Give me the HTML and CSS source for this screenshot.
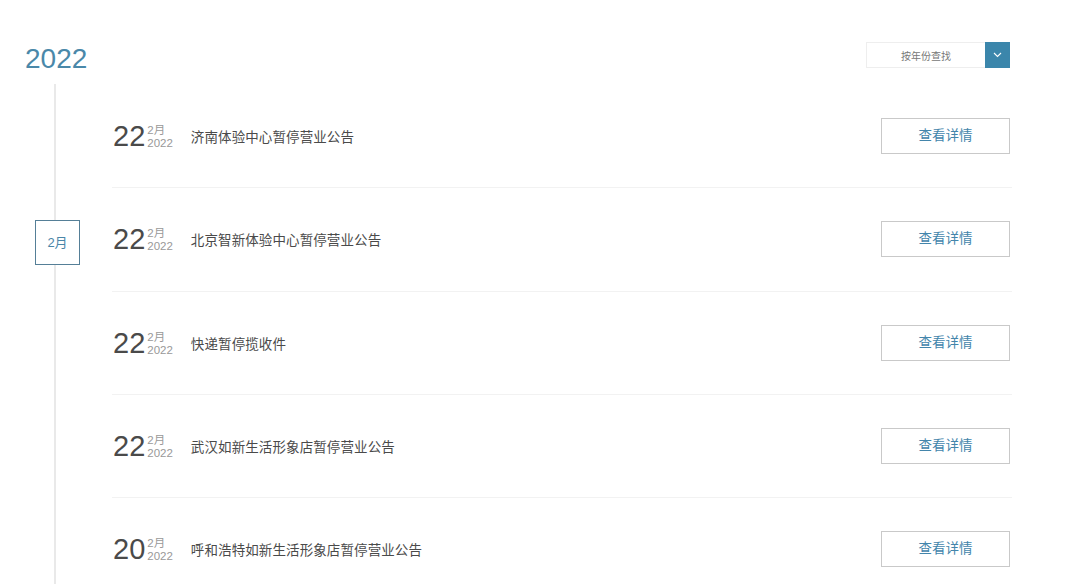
FILE: index.html
```html
<!DOCTYPE html>
<html lang="zh-CN">
<head>
    <meta charset="UTF-8">
    <meta name="viewport" content="width=device-width, initial-scale=1.0">
    <title>公告</title>
    <link rel="stylesheet" href="styles.css">
</head>
<body>
    <div class="page">
        <div class="head">
            <div class="year">2022</div>
            <div class="picker">
                <span class="picker-label">按年份查找</span>
                <span class="picker-btn">
                    <svg width="9" height="6" viewBox="0 0 9 6"><path d="M1 1l3.5 3.5L8 1" fill="none" stroke="#fff" stroke-width="1.1"/></svg>
                </span>
            </div>
        </div>
        <div class="timeline">
            <div class="month">2月</div>
            <div class="row">
                <div class="date"><span class="day">22</span><span class="sub"><span>2月</span><span>2022</span></span></div>
                <div class="title">济南体验中心暂停营业公告</div>
                <a class="more" href="#">查看详情</a>
            </div>
            <div class="row">
                <div class="date"><span class="day">22</span><span class="sub"><span>2月</span><span>2022</span></span></div>
                <div class="title">北京智新体验中心暂停营业公告</div>
                <a class="more" href="#">查看详情</a>
            </div>
            <div class="row">
                <div class="date"><span class="day">22</span><span class="sub"><span>2月</span><span>2022</span></span></div>
                <div class="title">快递暂停揽收件</div>
                <a class="more" href="#">查看详情</a>
            </div>
            <div class="row">
                <div class="date"><span class="day">22</span><span class="sub"><span>2月</span><span>2022</span></span></div>
                <div class="title">武汉如新生活形象店暂停营业公告</div>
                <a class="more" href="#">查看详情</a>
            </div>
            <div class="row">
                <div class="date"><span class="day">20</span><span class="sub"><span>2月</span><span>2022</span></span></div>
                <div class="title">呼和浩特如新生活形象店暂停营业公告</div>
                <a class="more" href="#">查看详情</a>
            </div>
        </div>
    </div>
</body>
</html>
```

FILE: styles.css
```css
body {
    margin: 0;
    background: #fff;
    font-family: "Liberation Sans", "Noto Sans CJK SC", sans-serif;
    color: #333;
    overflow: hidden;
}
.page {
    padding: 42px 0 0 25px;
    width: 985px;
}
.head {
    display: flex;
    justify-content: space-between;
    align-items: flex-start;
    height: 42px;
}
.year {
    font-size: 28px;
    line-height: 34px;
    color: #4a88a9;
}
.picker {
    display: flex;
    width: 144px;
    height: 26px;
    box-sizing: border-box;
    border: 1px solid #eee;
    border-right: none;
}
.picker-label {
    flex: 1;
    padding-top: 3px;
    font-size: 10px;
    line-height: 21px;
    color: #777;
    text-align: center;
}
.picker-btn {
    width: 25px;
    height: 26px;
    margin-top: -1px;
    background: #3b86ab;
    display: flex;
    align-items: center;
    justify-content: center;
}
.timeline {
    position: relative;
    margin-left: 29px;
    border-left: 2px solid #e9e9e9;
    padding: 1px 0 0 56px;
    height: 520px;
}
.month {
    position: absolute;
    left: -21px;
    top: 136px;
    width: 43px;
    height: 43px;
    border: 1px solid #557f97;
    background: #fff;
    color: #4a86a8;
    font-size: 13px;
    line-height: 43px;
    text-align: center;
}
.row {
    display: flex;
    align-items: center;
    width: 900px;
    height: 102.3px;
    border-bottom: 1px solid #f2f2f2;
}
.date {
    display: flex;
    align-items: center;
    padding-left: 1px;
    color: #4a4a4a;
}
.day {
    font-size: 29px;
    line-height: 28px;
}
.sub {
    display: flex;
    flex-direction: column;
    margin: 2px 0 0 2px;
    font-size: 11.5px;
    line-height: 13px;
    color: #999;
}
.title {
    flex: 1;
    margin-left: 18px;
    font-size: 13.5px;
    letter-spacing: 0.1px;
    color: #4a4a4a;
}
.more {
    width: 127px;
    height: 34px;
    margin-right: 2px;
    border: 1px solid #c9c9c9;
    color: #4385ab;
    font-size: 13.5px;
    line-height: 34px;
    text-align: center;
    text-decoration: none;
}
```
